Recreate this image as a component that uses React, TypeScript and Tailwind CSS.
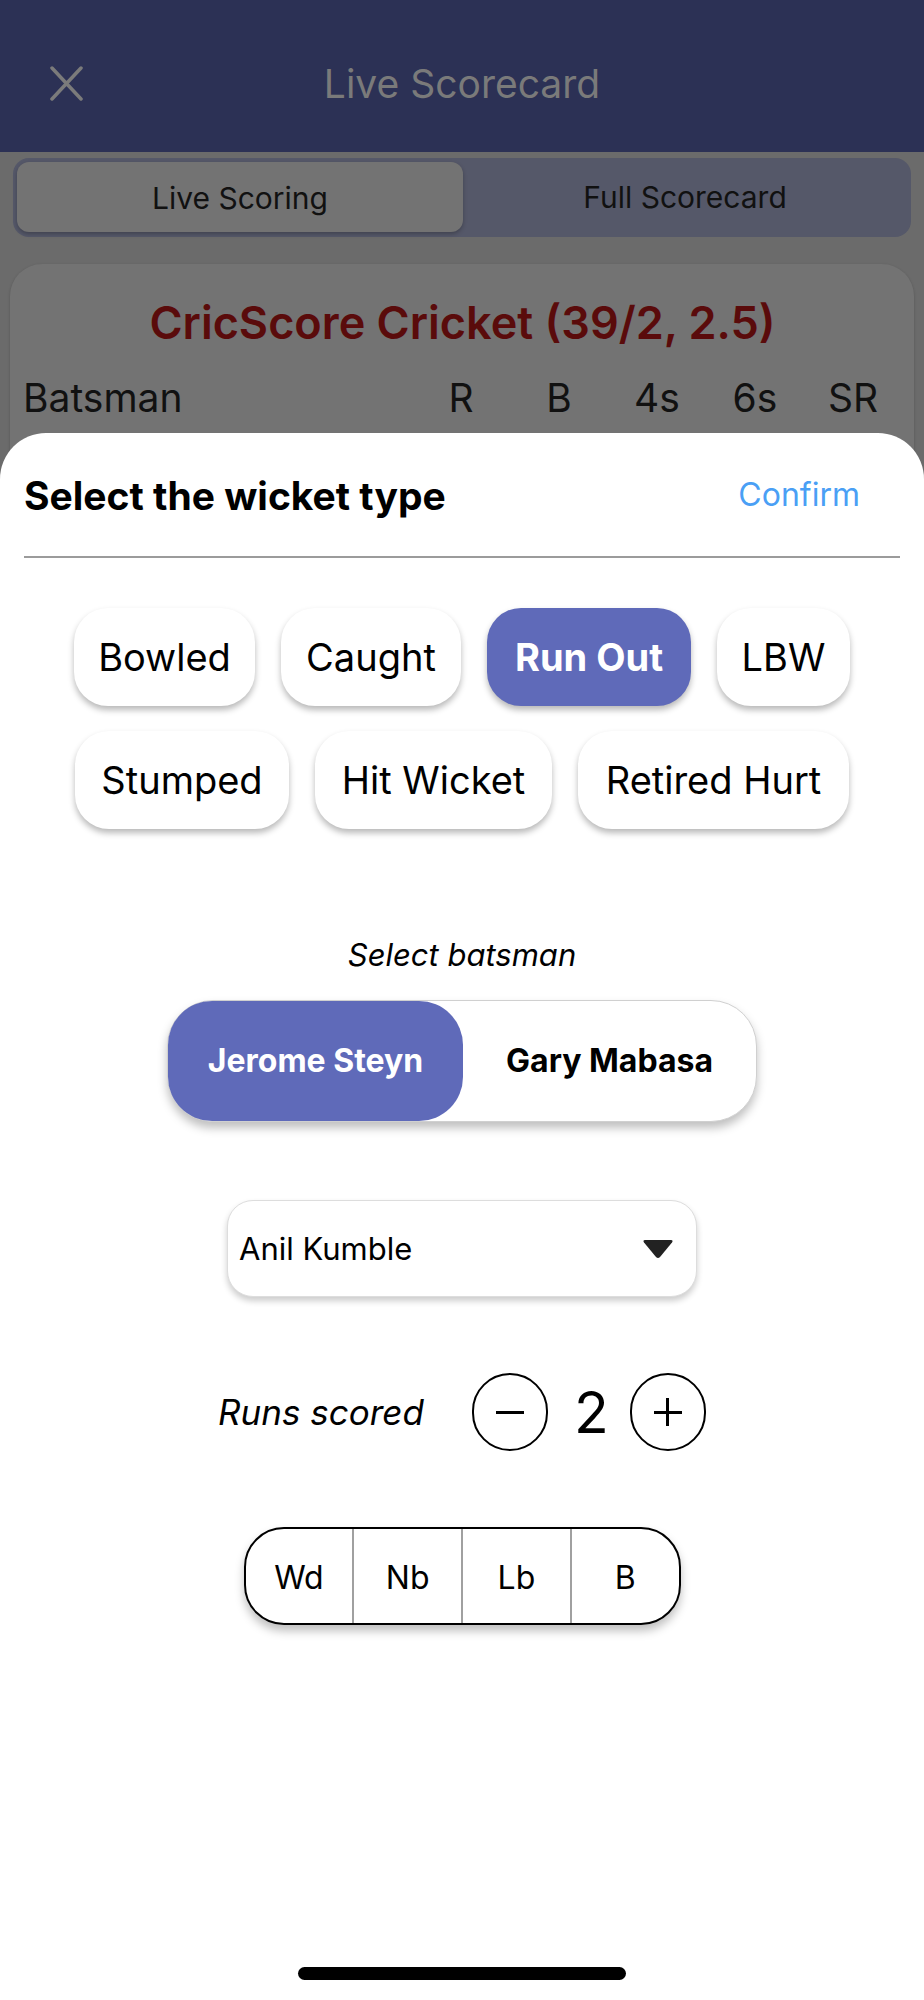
const font = "font-['Inter','Noto_Sans',sans-serif]";

const WicketChip = ({ label, width, active }: { label: string; width: string; active?: boolean }) => {
    return (
        <div
            className={`${width} h-[98px] rounded-[34px] flex items-center justify-center text-[38px] leading-none shadow-[0_4px_6px_rgba(0,0,0,0.28)] ${
                active ? "bg-[#5f6ab9] text-white font-bold" : "bg-white text-black"
            }`}
        >
            {label}
        </div>
    );
};

const App: React.FC = () => {
    return (
        <div className={`relative w-[924px] h-[2000px] overflow-hidden bg-[#6b6b6b] ${font}`}>
            {/* dimmed screen behind the sheet */}
            <div className="h-[152px] bg-[#2c3155] flex items-center pt-[14px] px-[50px]">
                <svg width="33" height="35" viewBox="0 0 33 35">
                    <path d="M2 2 L31 33 M31 2 L2 33" stroke="#7b7b7b" strokeWidth="3.5" strokeLinecap="round" />
                </svg>
                <div className="flex-1 text-center text-[39px] text-[#7a7a7a] leading-none">Live Scorecard</div>
                <div className="w-[33px]" />
            </div>
            <div className="mx-[13px] mt-[6px] h-[79px] rounded-[16px] bg-[#555869] p-[4px] flex">
                <div className="w-[446px] h-[70px] rounded-[12px] bg-[#737373] shadow-[0_2px_4px_rgba(0,0,0,0.25)] flex items-center justify-center text-[30px] text-[#111] pt-[2px]">
                    Live Scoring
                </div>
                <div className="flex-1 flex items-center justify-center text-[30px] text-[#111]">Full Scorecard</div>
            </div>
            <div className="mx-[10px] mt-[27px] h-[300px] rounded-[32px] bg-[#737373] shadow-[0_1px_3px_rgba(0,0,0,0.2)] pt-[36px] pr-[12px] pl-[13px]">
                <div className="text-center text-[45px] font-semibold text-[#5a0b0b] leading-none">
                    CricScore Cricket (39/2, 2.5)
                </div>
                <div className="flex items-center mt-[33px] text-[39px] text-[#111] leading-none">
                    <div className="flex-1">Batsman</div>
                    <div className="w-[98px] text-center">R</div>
                    <div className="w-[98px] text-center">B</div>
                    <div className="w-[98px] text-center">4s</div>
                    <div className="w-[98px] text-center">6s</div>
                    <div className="w-[98px] text-center">SR</div>
                </div>
            </div>

            {/* bottom sheet */}
            <div className="absolute top-[433px] left-0 right-0 bottom-0 bg-white rounded-t-[46px] flex flex-col items-center">
                <div className="w-full flex items-center justify-between pl-[24px] pr-[64px] pt-[18px] h-[106px]">
                    <div className="text-[39px] font-bold text-black leading-none">Select the wicket type</div>
                    <div className="text-[32px] text-[#4a9ff5] leading-none">Confirm</div>
                </div>
                <div className="w-[876px] h-[2px] bg-[#9b9b9b] mt-[17px]" />

                <div className="mt-[50px] flex gap-[26px]">
                    <WicketChip label="Bowled" width="w-[181px]" />
                    <WicketChip label="Caught" width="w-[180px]" />
                    <WicketChip label="Run Out" width="w-[204px]" active />
                    <WicketChip label="LBW" width="w-[133px]" />
                </div>
                <div className="mt-[25px] flex gap-[26px]">
                    <WicketChip label="Stumped" width="w-[214px]" />
                    <WicketChip label="Hit Wicket" width="w-[237px]" />
                    <WicketChip label="Retired Hurt" width="w-[271px]" />
                </div>

                <div className="mt-[110px] text-[31px] italic text-black leading-none">Select batsman</div>
                <div className="mt-[30px] w-[590px] h-[122px] rounded-[46px] border border-[#d0d0d0] bg-white shadow-[0_6px_10px_rgba(0,0,0,0.25)] flex">
                    <div className="w-[295px] h-full rounded-[44px] bg-[#5f6ab9] flex items-center justify-center text-[32px] font-bold text-white">
                        Jerome Steyn
                    </div>
                    <div className="flex-1 flex items-center justify-center text-[32px] font-bold text-black">Gary Mabasa</div>
                </div>

                <div className="mt-[78px] w-[470px] h-[97px] rounded-[26px] border border-[#dddddd] bg-white shadow-[0_4px_6px_rgba(0,0,0,0.2)] flex items-center pl-[11px] pr-[22px]">
                    <div className="flex-1 text-[31px] text-black leading-none">Anil Kumble</div>
                    <svg width="32" height="20" viewBox="0 0 32 20">
                        <path d="M3 1 H29 Q31.5 1 30 3.5 L18 18 Q16 20 14 18 L2 3.5 Q0.5 1 3 1 Z" fill="#222222" />
                    </svg>
                </div>

                <div className="mt-[76px] flex items-center">
                    <div className="text-[35px] italic text-black leading-none mr-[48px]">Runs scored</div>
                    <div className="w-[76px] h-[78px] rounded-full border-2 border-black flex items-center justify-center">
                        <div className="w-[28px] h-[3px] bg-black" />
                    </div>
                    <div className="mx-[26px] w-[30px] text-center text-[57px] text-black leading-none">2</div>
                    <div className="relative w-[76px] h-[78px] rounded-full border-2 border-black flex items-center justify-center">
                        <div className="w-[28px] h-[3px] bg-black" />
                        <div className="absolute w-[3px] h-[28px] bg-black" />
                    </div>
                </div>

                <div className="mt-[76px] w-[437px] h-[98px] rounded-[40px] border-[2.5px] border-black bg-white shadow-[0_6px_10px_rgba(0,0,0,0.25)] flex overflow-hidden text-[32px] text-black">
                    <div className="flex-1 flex items-center justify-center border-r-2 border-[#a0a0a0] pt-[3px]">Wd</div>
                    <div className="flex-1 flex items-center justify-center border-r-2 border-[#a0a0a0] pt-[3px]">Nb</div>
                    <div className="flex-1 flex items-center justify-center border-r-2 border-[#a0a0a0] pt-[3px]">Lb</div>
                    <div className="flex-1 flex items-center justify-center pt-[3px]">B</div>
                </div>

                <div className="mt-auto mb-[20px] w-[328px] h-[13px] rounded-full bg-black" />
            </div>
        </div>
    );
};

export default App;
